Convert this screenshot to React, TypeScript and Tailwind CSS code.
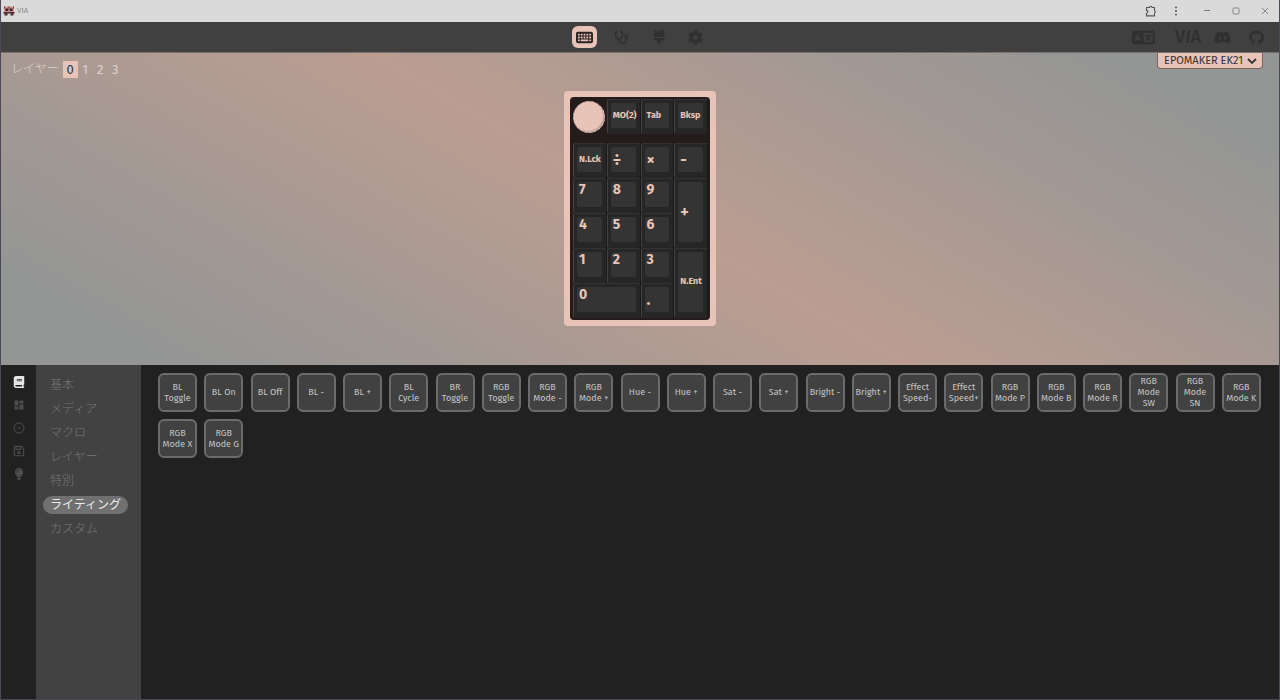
import React, { useState } from 'react';
import { CircleDot } from 'lucide-react';
import {
  FaBook,
  FaBrush,
  FaDiscord,
  FaGear,
  FaGithub,
  FaKeyboard,
  FaLanguage,
  FaLightbulb,
  FaRegFloppyDisk,
  FaStethoscope,
} from 'react-icons/fa6';
import { MdDashboard } from 'react-icons/md';

type Key = { label: string; kind?: 'digit' | 'operator' | 'dot'; span?: string };

const topKeys: Key[] = [{ label: 'MO(2)' }, { label: 'Tab' }, { label: 'Bksp' }];

const padKeys: Key[] = [
  { label: 'N.Lck' },
  { label: '÷', kind: 'operator' },
  { label: '×', kind: 'operator' },
  { label: '-', kind: 'operator' },
  { label: '7', kind: 'digit' },
  { label: '8', kind: 'digit' },
  { label: '9', kind: 'digit' },
  { label: '+', kind: 'operator', span: 'row-span-2' },
  { label: '4', kind: 'digit' },
  { label: '5', kind: 'digit' },
  { label: '6', kind: 'digit' },
  { label: '1', kind: 'digit' },
  { label: '2', kind: 'digit' },
  { label: '3', kind: 'digit' },
  { label: 'N.Ent', span: 'row-span-2' },
  { label: '0', kind: 'digit', span: 'col-span-2' },
  { label: '.', kind: 'dot' },
];

const legendStyles = {
  digit: 'items-start text-sm leading-4',
  operator: 'items-center text-base leading-4',
  dot: 'items-end pb-1 text-base leading-4',
  text: 'items-center text-[9px]',
};

const keycodes = [
  'BL Toggle', 'BL On', 'BL Off', 'BL -', 'BL +', 'BL\nCycle', 'BR Toggle', 'RGB Toggle',
  'RGB Mode -', 'RGB Mode +', 'Hue -', 'Hue +', 'Sat -', 'Sat +', 'Bright -', 'Bright +',
  'Effect Speed-', 'Effect Speed+', 'RGB Mode P', 'RGB Mode B', 'RGB Mode R', 'RGB Mode SW',
  'RGB Mode SN', 'RGB Mode K', 'RGB Mode X', 'RGB Mode G',
];

const categories = ['基本', 'メディア', 'マクロ', 'レイヤー', '特別', 'ライティング', 'カスタム'];

const panes = [
  { name: 'Keymap', icon: FaBook },
  { name: 'Layouts', icon: MdDashboard },
  { name: 'Macros', icon: CircleDot },
  { name: 'Save + Load', icon: FaRegFloppyDisk },
  { name: 'Lighting', icon: FaLightbulb },
];

const Keycap: React.FC<{ k: Key }> = ({ k }) => (
  <button
    className={`flex rounded-xs border-t border-l border-t-[#343334] border-l-[#454242] border-r border-r-[#1a1819] bg-[#272627] pt-[3px] pr-1 pb-[6px] pl-[3px] ${k.span ?? ''}`}
  >
    <span
      className={`flex h-full w-full rounded-xs bg-[#353435] pl-[2px] font-bold whitespace-nowrap text-[#e8c4b8] ${legendStyles[k.kind ?? 'text']}`}
    >
      {k.label}
    </span>
  </button>
);

const TitleBar: React.FC = () => (
  <div className="flex h-[22px] items-center bg-[#dadadb] pl-[2px] text-[#8a8a8a]">
    <svg viewBox="0 0 24 20" className="h-[10px] w-3">
      <rect x="2" y="1" width="20" height="13" rx="2" fill="#cf8f88" />
      <path d="M1 12h22v3H1zM3 15h6v4H3zM15 15h6v4h-6z" fill="#4b3034" />
      <path d="M5 5h5v5H5zM14 5h5v5h-5z" fill="#3a2226" />
      <path d="M2 1h2v4H2zM11 1h2v8h-2zM20 1h2v4h-2z" fill="#5e3a3d" />
    </svg>
    <span className="ml-[2px] text-[8px]">VIA</span>
    <div className="ml-auto flex items-center">
      <button aria-label="Extensions" className="flex w-[25px] justify-center">
        <svg viewBox="0 0 12 12" className="size-3" fill="none" stroke="#555" strokeWidth="1.1">
          <path d="M1.5 2.5h3a1.3 1.3 0 0 1 2.6 0h2.4v3a1.3 1.3 0 0 1 0 2.4v3H1.5V8.2a1.4 1.4 0 0 0 0-2.8z" />
        </svg>
      </button>
      <button aria-label="Menu" className="flex w-[25px] justify-center">
        <svg viewBox="0 0 12 12" className="size-3" fill="#444">
          <circle cx="6" cy="2.4" r="0.9" />
          <circle cx="6" cy="6" r="0.9" />
          <circle cx="6" cy="9.6" r="0.9" />
        </svg>
      </button>
      <button aria-label="Minimize" className="ml-1 flex w-[29px] justify-center">
        <svg viewBox="0 0 12 12" className="size-3" stroke="#777"><path d="M3 5.5h6" /></svg>
      </button>
      <button aria-label="Maximize" className="flex w-[29px] justify-center">
        <svg viewBox="0 0 12 12" className="size-3" fill="none" stroke="#888"><rect x="3" y="3" width="6" height="6" rx="1" /></svg>
      </button>
      <button aria-label="Close" className="flex w-[29px] justify-center">
        <svg viewBox="0 0 12 12" className="size-3" stroke="#888"><path d="M3 3l6 6M9 3l-6 6" /></svg>
      </button>
    </div>
  </div>
);

const Header: React.FC = () => (
  <header className="grid h-[31px] grid-cols-[1fr_auto_1fr] items-center border-b border-[#77706d] bg-[#404040] text-[#303030]">
    <div />
    <nav className="flex items-center gap-3">
      <a href="#configure" aria-label="Configure" className="flex h-[22px] w-[25px] items-center justify-center rounded-md bg-[#e8c4b8] text-[#2a2524]">
        <FaKeyboard size={17} />
      </a>
      <a href="#test" aria-label="Key tester" className="flex w-[25px] justify-center"><FaStethoscope size={15} /></a>
      <a href="#design" aria-label="Design" className="flex w-[25px] justify-center"><FaBrush size={14} /></a>
      <a href="#settings" aria-label="Settings" className="flex w-[25px] justify-center"><FaGear size={15} /></a>
    </nav>
    <div className="flex items-center justify-end pr-[15px]">
      <a href="#language" aria-label="Language" className="mr-5"><FaLanguage size={23} /></a>
      <a href="#via" className="mr-[13px] text-lg leading-none font-medium">V<i>I</i>A</a>
      <a href="#discord" aria-label="Discord" className="mr-[18px]"><FaDiscord size={17} /></a>
      <a href="#github" aria-label="GitHub"><FaGithub size={15} /></a>
    </div>
  </header>
);

export default function App() {
  const [layer, setLayer] = useState(0);
  const [category, setCategory] = useState('ライティング');
  const [pane, setPane] = useState('Keymap');

  return (
    <div className="flex min-h-screen flex-col border-x border-b border-[#4a4955] bg-[#212121] font-['Fira_Sans','Noto_Sans','Noto_Sans_CJK_JP',sans-serif]">
      <TitleBar />
      <Header />

      {/* Keyboard */}
      <section className="relative bg-[linear-gradient(30deg,#949695_10%,#bb9d91_50%,#949695_90%)] pt-[38px] pb-[39px]">
        <div className="absolute top-[7px] left-[10px] flex items-center text-[12px] text-[#dcd2cd]">
          <span className="mr-1 font-light">レイヤー</span>
          {[0, 1, 2, 3].map((n) => (
            <button
              key={n}
              onClick={() => setLayer(n)}
              className={`h-[17px] w-[15px] text-[13px] leading-[17px] ${layer === n ? 'bg-[#e8c4b8] text-[#363434]' : ''}`}
            >
              {n}
            </button>
          ))}
        </div>
        <div className="absolute top-0 right-4 flex items-center rounded-b-sm border border-t-0 border-[#7d655d] bg-[#e8c4b8] text-[#363434]">
          <select aria-label="Keyboard" className="h-[15px] appearance-none bg-transparent pr-[19px] pl-[6px] text-[11px] leading-[15px]">
            <option>EPOMAKER EK21</option>
          </select>
          <svg viewBox="0 0 10 6" className="pointer-events-none absolute right-[5px] h-[6px] w-[10px]" fill="none" stroke="currentColor" strokeWidth="1.8">
            <path d="M1 1l4 4 4-4" />
          </svg>
        </div>

        <div className="mx-auto w-fit rounded-sm bg-[#e8c4b8] p-[6px]">
          <div className="w-[140px] rounded-sm bg-[#231c1a] pt-[2px] pr-[2px] pb-[2px] pl-[3px]">
            <div className="mb-[9px] grid h-[35px] grid-cols-4">
              <button aria-label="Encoder" className="mt-[2px] size-8 rounded-full border border-dashed border-[#b39a91] bg-[#e8c4b8] shadow-[inset_-1px_-1px_0_#bfa297]" />
              {topKeys.map((k) => (
                <Keycap key={k.label} k={k} />
              ))}
            </div>
            <div className="grid auto-rows-[35px] grid-cols-4">
              {padKeys.map((k) => (
                <Keycap key={k.label} k={k} />
              ))}
            </div>
          </div>
        </div>
      </section>

      {/* Panels */}
      <section className="flex grow">
        <nav className="flex w-[35px] flex-col items-center gap-[11px] pt-[11px]">
          {panes.map(({ name, icon: Icon }) => (
            <button
              key={name}
              aria-label={name}
              onClick={() => setPane(name)}
              className={pane === name ? 'text-[#e6e6e6]' : 'text-[#4c4c4c]'}
            >
              <Icon size={12} />
            </button>
          ))}
        </nav>
        <nav className="flex w-[105px] flex-col items-start gap-[6px] bg-[#424242] pt-[11px] pl-[7px]">
          {categories.map((c) => (
            <button
              key={c}
              onClick={() => setCategory(c)}
              className={`h-[18px] rounded-full px-[7px] text-[12px] leading-[18px] ${
                category === c ? 'bg-[#707070] text-[#ececec]' : 'font-light text-[#777]'
              }`}
            >
              {c}
            </button>
          ))}
        </nav>
        <div className="grid grow grid-cols-[repeat(auto-fill,39px)] content-start justify-between gap-[7px] pt-2 pr-[18px] pl-[17px]">
          {keycodes.map((code) => (
            <button
              key={code}
              className="flex h-[39px] items-center justify-center rounded-md border-2 border-[#6b6b6b] bg-[#414141] text-center text-[9px] leading-[11px] whitespace-pre-line text-[#c6c6c6]"
            >
              {code}
            </button>
          ))}
        </div>
      </section>
    </div>
  );
}
